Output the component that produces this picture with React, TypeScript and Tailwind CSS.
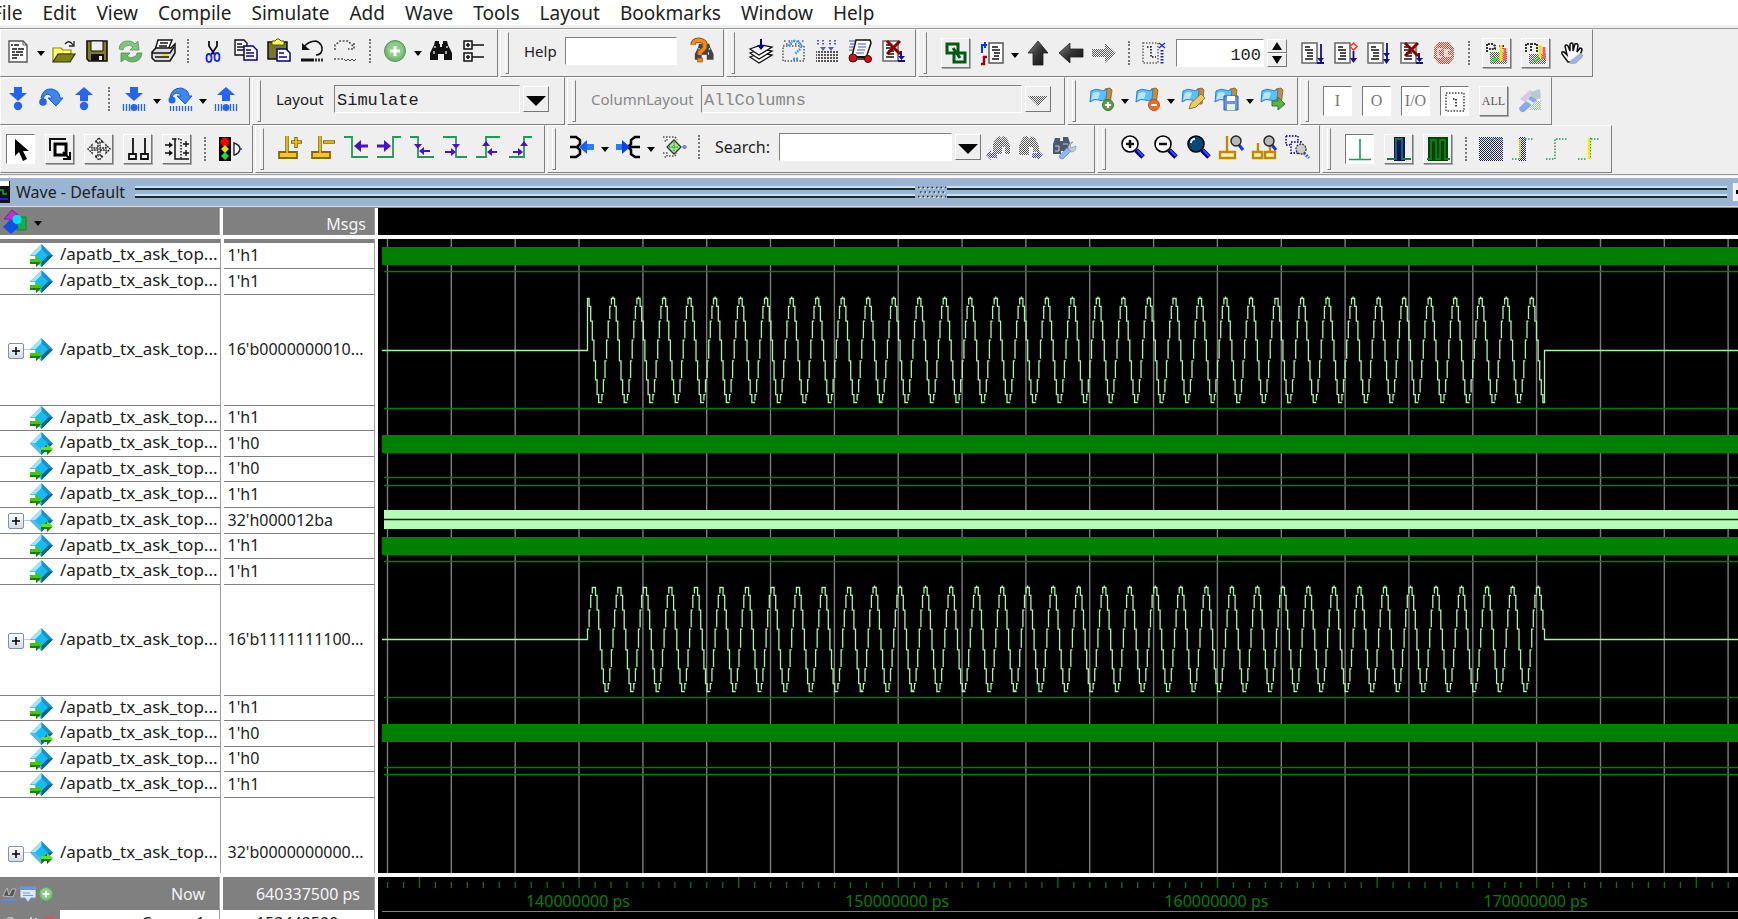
import type { ReactNode } from "react";

const signals = [
  { value: "1'h1", dir: "in", size: "h-[26px]" },
  { value: "1'h1", dir: "in", size: "h-[26px]" },
  { value: "16'b0000000010...", dir: "in", size: "h-[111px]", bus: true },
  { value: "1'h1", dir: "in", size: "h-[25px]" },
  { value: "1'h0", dir: "out", size: "h-[26px]" },
  { value: "1'h0", dir: "in", size: "h-[25px]" },
  { value: "1'h1", dir: "in", size: "h-[26px]" },
  { value: "32'h000012ba", dir: "out", size: "h-[26px]", bus: true },
  { value: "1'h1", dir: "in", size: "h-[25px]" },
  { value: "1'h1", dir: "in", size: "h-[26px]" },
  { value: "16'b1111111100...", dir: "in", size: "h-[111px]", bus: true },
  { value: "1'h1", dir: "in", size: "h-[25px]" },
  { value: "1'h0", dir: "out", size: "h-[26px]" },
  { value: "1'h0", dir: "in", size: "h-[25px]" },
  { value: "1'h1", dir: "in", size: "h-[26px]" },
  { value: "32'b0000000000...", dir: "out", size: "h-[111px]", bus: true },
];

const menus = ["File", "Edit", "View", "Compile", "Simulate", "Add", "Wave", "Tools", "Layout", "Bookmarks", "Window", "Help"];

/* ---------- icon parts ---------- */

const blue = "#2563f5";
const edge = "#229a55";
const violet = "#4a0fd0";

const docLines = (
  <>
    <path d="M2 2h15v20H2z" fill="#fff" stroke="#666" strokeWidth="1.5" />
    <path d="M5 6h5M5 9h8M7 12h6M7 15h6M5 18h8" stroke="#111" strokeWidth="1.4" />
  </>
);

const redCross = <path d="M6 2l13 13M19 2L6 15" stroke="#8b0000" strokeWidth="3" />;

const bookmark = (
  <>
    <path d="M15 2l5-1 2 2-2 14h-5z" fill="#c98a3c" stroke="#8a5a1c" strokeWidth=".8" />
    <path d="M1 4q5-3 9-1t7-1l-1 10q-3 3-7 1t-9 2z" fill="#5cc0f6" stroke="#2f80c8" />
    <path d="M3 6q4-2 7 0l-2 6q-3-1-7 1z" fill="#b4e6ff" />
  </>
);

const bars = <path d="M1.5 17v7M4.5 17v7M7.5 17v7M16.5 17v7M19.5 17v7M22.5 17v7" stroke={blue} strokeWidth="1.3" />;

const binoculars = (fill: string) => (
  <>
    <path d="M6 2h4v3h1v3h2V5h1V2h4l1 4 4 8v7h-8v-6h-6v6H1v-7l4-8z" fill={fill} />
    <path d="M6 7v2M5 12v3M18 7v2M17 12v3" stroke="#fff" strokeWidth="1.2" />
  </>
);

const magnifier = (fill: string) => (
  <>
    <path d="M16 15l7 7" stroke="#000080" strokeWidth="5" />
    <path d="M17 15l6 6" stroke="#3050ff" strokeWidth="2" />
    <circle cx="10" cy="9" r="8" fill={fill} stroke="#000" strokeWidth="1.6" />
  </>
);

const smallLens = (
  <>
    <path d="M20 10l4 5" stroke="#2030e0" strokeWidth="3" />
    <circle cx="17" cy="6" r="5" fill="#b8b8b8" stroke="#222" strokeWidth="1.4" />
  </>
);

const icons: Record<string, ReactNode> = {
  new: (
    <>
      <path d="M3 2h14l4 4v17H3z" fill="#fff" stroke="#555" strokeWidth="1.4" />
      <path d="M17 2v4h4" fill="none" stroke="#555" />
      <path d="M5 6h2m1 0h5M6 10h5m1 0h6M6 13h3m1 0h7M6 16h7m1 0h3M6 19h5" stroke="#111" strokeWidth="1.6" />
    </>
  ),
  open: (
    <>
      <path d="M1 9h8l2 2h8v4H7l-5 7H1z" fill="#ffff70" stroke="#8a8a00" strokeWidth="1.2" />
      <path d="M6 15h17l-5 8H1z" fill="#80801a" stroke="#333300" strokeWidth="1.2" />
      <path d="M13 5q4-5 8 1m1-4v5h-5" fill="none" stroke="#222" strokeWidth="1.3" />
    </>
  ),
  save: (
    <>
      <path d="M2 2h20v20H4l-2-2z" fill="#80801a" stroke="#111" strokeWidth="1.6" />
      <path d="M6 2h12v10H6z" fill="#eee" stroke="#111" />
      <path d="M6 15h13v7H6z" fill="#111" />
      <path d="M14 17h3v4h-3z" fill="#eee" />
    </>
  ),
  refresh: (
    <>
      <path d="M1 10Q2 1 11 2q4 0 6 3l3-3 1 9h-9l3-3q-3-3-7-1-3 1-3 4z" fill="#82c282" stroke="#5a9a5a" strokeWidth=".8" />
      <path d="M24 14q-1 9-10 9-4 0-7-3l-4 3v-9h9l-3 3q3 3 7 1 3-1 3-4z" fill="#6fb46f" stroke="#4f8f4f" strokeWidth=".8" />
    </>
  ),
  print: (
    <>
      <path d="M7 1h14l-4 10H4z" fill="#fff" stroke="#111" strokeWidth="1.4" />
      <path d="M9 4h8M8 7h8" stroke="#111" strokeWidth="1.3" />
      <path d="M1 13l4-4h15l4-4v9l-5 8H4l-3-3z" fill="#ddd" stroke="#111" strokeWidth="1.5" />
      <path d="M1 14h18l4-6M4 18h14" fill="none" stroke="#111" strokeWidth="1.4" />
      <path d="M11 16h6" stroke="#ffe000" strokeWidth="2" />
    </>
  ),
  cut: (
    <>
      <path d="M8 2v5l6 9M16 2v5l-6 9" fill="none" stroke="#111" strokeWidth="1.8" />
      <ellipse cx="8" cy="19" rx="2.5" ry="4" fill="none" stroke="#1020ff" strokeWidth="1.8" />
      <ellipse cx="16" cy="18" rx="2.5" ry="4" fill="none" stroke="#1020ff" strokeWidth="1.8" />
    </>
  ),
  copy: (
    <>
      <path d="M1 1h9l3 3v12H1z" fill="#fff" stroke="#111" strokeWidth="1.4" />
      <path d="M3 5h5M3 8h7M3 11h7" stroke="#111" strokeWidth="1.3" />
      <path d="M10 7h9l4 4v10H10z" fill="#fff" stroke="#00008b" strokeWidth="1.5" />
      <path d="M12 11h5M12 14h8M12 17h8" stroke="#00008b" strokeWidth="1.3" />
    </>
  ),
  paste: (
    <>
      <path d="M1 3h19v17H1z" fill="#77772a" stroke="#111" strokeWidth="1.5" />
      <path d="M5 2h3l2-2h2l2 2h3v4H5z" fill="#ffff60" stroke="#555500" />
      <path d="M10 10h9l4 4v8H10z" fill="#fff" stroke="#00008b" strokeWidth="1.5" />
      <path d="M12 14h5M12 18h8" stroke="#00008b" strokeWidth="1.3" />
    </>
  ),
  undo: (
    <>
      <path d="M3 9Q8 2 16 2q7 3 6 9-1 5-6 5" fill="none" stroke="#111" strokeWidth="1.6" />
      <path d="M2 4v7h8z" fill="#111" />
      <path d="M1 21h13" stroke="#111" strokeWidth="3" />
      <path d="M15 21h9" stroke="#333" strokeWidth="3" strokeDasharray="2 1" />
    </>
  ),
  redo: (
    <>
      <path d="M2 11V6l5-4h8l6 6m0-4v6h-6" fill="none" stroke="#555" strokeWidth="1.6" strokeDasharray="2 1.5" />
      <path d="M1 20h10" stroke="#555" strokeWidth="1.6" strokeDasharray="2 1.5" />
      <path d="M11 20l2 2 2-2 2 2 2-2 2 2 2-2" fill="none" stroke="#444" />
    </>
  ),
  plus: (
    <>
      <circle cx="12" cy="12" r="10.5" fill="#78b87a" stroke="#4f9a52" />
      <circle cx="12" cy="11" r="8" fill="#8fcb8c" />
      <path d="M12 7v10M7 12h10" stroke="#fff" strokeWidth="3" />
    </>
  ),
  binoc: binoculars("#111"),
  tree: (
    <path d="M2 2h8v8H2zM2 14h8v8H2zM4 6h4M6 4v4M4 18h4M6 16v4M10 6h12M10 18h12" fill="none" stroke="#111" strokeWidth="1.5" />
  ),
  helpFind: (
    <>
      <g transform="translate(4 3) scale(.85)">{binoculars("#444")}</g>
      <path d="M3 6q0-5 6-5 7 1 6 6 0 3-5 6v3" fill="none" stroke="#8a4400" strokeWidth="5" />
      <path d="M3 6q0-5 6-5 7 1 6 6 0 3-5 6v3" fill="none" stroke="#f58a1a" strokeWidth="3.5" />
      <path d="M7.5 19h5v4h-5z" fill="#f58a1a" stroke="#8a4400" strokeWidth=".6" />
    </>
  ),
  stack: (
    <>
      <path d="M1 18l11-4 11 2-13 8z" fill="#fff" stroke="#111" strokeWidth="1.3" />
      <path d="M1 14l11-4 11 2-13 8z" fill="#fff" stroke="#111" strokeWidth="1.3" />
      <path d="M1 10l11-4 11 2-13 8z" fill="#fff" stroke="#111" strokeWidth="1.3" />
      <path d="M12 0v9" stroke="#00008b" strokeWidth="2" />
      <path d="M8 6h8l-4 5z" fill="#00008b" />
    </>
  ),
  compileQ: (
    <>
      <path d="M1 7h21v15H1z" fill="none" stroke="#555" strokeWidth="1.5" strokeDasharray="1.5 1.5" />
      <path d="M2 2h20M4 5h18" stroke="#4050b0" strokeWidth="1.5" strokeDasharray="1.5 3" />
      <path d="M7 7q0-5 6-5 8 2 5 8l-5 5" fill="none" stroke="#3d9be8" strokeWidth="2.5" strokeDasharray="1.5 1" />
      <path d="M11 20h5" stroke="#3d9be8" strokeWidth="3" strokeDasharray="2 1" />
    </>
  ),
  compileAll: (
    <>
      <path d="M1 12h22v11H1z" fill="url(#dotGray)" />
      <path d="M3 1v6M8 1v6M15 1v6M20 1v6" stroke="#2a2aa0" strokeWidth="1.5" strokeDasharray="1.5 1.5" />
      <path d="M5 8l3 4 3-4zM13 8l3 4 3-4z" fill="#5a5ac0" />
    </>
  ),
  compileStep: (
    <>
      <path d="M8 1h14l1 3-4 12-3 4H5l-1-3z" fill="#fff" stroke="#111" strokeWidth="1.5" />
      <path d="M1 2h6M2 5h5M1 8h5M1 11h4M10 5h8M10 8h8M9 11h8M8 14h8" stroke="#4454b8" strokeWidth="1.2" />
      <path d="M3 18h18" stroke="#111" strokeWidth="2" />
      <circle cx="5" cy="19" r="4" fill="#d01020" stroke="#500" />
      <circle cx="20" cy="20" r="3.5" fill="#d01020" stroke="#500" />
    </>
  ),
  docStop: (
    <>
      {docLines}
      {redCross}
      <path d="M20 12v7M17 22h7" stroke="#101090" strokeWidth="2" />
      <path d="M17 17h7l-3.5 4z" fill="#101090" />
    </>
  ),
  link: <path d="M3 3h11v9H3zM10 12h11v9H10zM9 7l7 10" fill="none" stroke="#005a14" strokeWidth="3" />,
  restart: (
    <>
      <path d="M9 2h14v20H9z" fill="#fff" stroke="#555" strokeWidth="1.5" />
      <path d="M12 6h6M12 9h8M14 12h6M14 15h5M12 18h7" stroke="#111" strokeWidth="1.4" />
      <path d="M2 12V4h5M5 1v6" fill="none" stroke="#1030ff" strokeWidth="2" />
      <path d="M1 23h3v-7h3" fill="none" stroke="#a00010" strokeWidth="2.5" />
    </>
  ),
  arrowUp: <path d="M12 0l10 12h-5v12H7V12H2z" fill="url(#shade)" stroke="#222" strokeWidth=".8" />,
  arrowLeft: <path d="M0 12L11 2v6h13v8H11v6z" fill="url(#shade)" stroke="#222" strokeWidth=".8" />,
  arrowRight: <path d="M24 12L13 2v6H0v8h13v6z" fill="url(#stipGray)" />,
  stepBack: (
    <>
      <path d="M1 2h15v20H1z" fill="none" stroke="#666" strokeWidth="1.5" strokeDasharray="1.5 1.5" />
      <path d="M5 6h4v10h5" fill="none" stroke="#444" strokeWidth="2" strokeDasharray="1.5 1.5" />
      <path d="M17 2l6 5m0-5l-6 5" stroke="#2a2aa8" strokeWidth="1.3" />
      <path d="M20 9v14" stroke="#2a2aa8" strokeWidth="3" strokeDasharray="1.5 1.5" />
    </>
  ),
  run: (
    <>
      {docLines}
      <path d="M21 3v18M17 22h7" stroke="#101090" strokeWidth="1.8" />
      <path d="M17 17h7l-3.5 4z" fill="#101090" />
    </>
  ),
  runCont: (
    <>
      {docLines}
      <path d="M20.5 2l3.5 3.5L20.5 9 17 5.5z" fill="#fff" stroke="#ff3030" strokeWidth="1.5" />
      <path d="M20.5 10v10" stroke="#101090" strokeWidth="1.8" />
      <path d="M17 17h7l-3.5 5z" fill="#101090" />
    </>
  ),
  runAll: (
    <>
      {docLines}
      <path d="M21 2v18" stroke="#101090" strokeWidth="1.8" />
      <path d="M17 12h7l-3.5 4zM17 18h7l-3.5 5z" fill="#101090" />
    </>
  ),
  stop: (
    <>
      <path d="M7 1h10l5 6v10l-5 6H7l-5-6V7z" fill="url(#stipRed)" />
      <path d="M10 8H6v8h4M13 8v8M18 9h-3v6h4" stroke="#f4e4e0" strokeWidth="1.6" fill="none" />
    </>
  ),
  perf: (
    <>
      <path d="M5 11h17v12H5z" fill="url(#stipGray)" />
      <path d="M2 11V3h6l2 2v3H4M14 5h4v3" fill="none" stroke="#333" strokeWidth="2" strokeDasharray="2 1" />
      <path d="M16 4v16" stroke="#f0e020" strokeWidth="3" />
      <path d="M20 7v13" stroke="#ff5a5a" strokeWidth="3" />
      <path d="M8 15l5 3-5 4z" fill="#30e030" />
    </>
  ),
  mem: (
    <>
      <path d="M5 13h17v10H5z" fill="url(#stipGray)" />
      <path d="M2 11V3h5v8m0-8h6v8" fill="none" stroke="#333" strokeWidth="2" strokeDasharray="2 1" />
      <path d="M16 4v13" stroke="#f0e020" strokeWidth="3" />
      <path d="M20 6v12" stroke="#ff5a5a" strokeWidth="3" />
      <path d="M9 18l3 2 3-4" stroke="#30e030" strokeWidth="2" fill="none" />
    </>
  ),
  hand: (
    <>
      <path d="M8 21Q5 17 2 13q-1-3 2-2l3 3L5 5q1-2 3 0l2 5V3q2-2 3 0v7l2-7q2-1 3 1l-1 7 3-4q2 0 2 2-2 7-6 12z" fill="#fff" stroke="#111" strokeWidth="1.5" />
      <path d="M10 23q-2-3 4-6l6-5q5 1 2 5l-7 6z" fill="#9ab6e4" />
    </>
  ),
  stepInto: (
    <>
      <path d="M8 0h8v6h5l-9 8-9-8h5z" fill={blue} />
      <circle cx="12" cy="19" r="4.2" fill={blue} />
    </>
  ),
  stepOver: (
    <>
      <path d="M2 11Q4 1 13 2q8 2 8 9h3l-7 8-8-8h4q-1-4-5-4-3 1-4 5z" fill="#3d86ea" stroke="#1a5ad0" />
      <circle cx="4" cy="15" r="3.8" fill={blue} />
    </>
  ),
  stepOut: (
    <>
      <path d="M12 0l9 8h-5v6H8V8H3z" fill={blue} />
      <circle cx="12" cy="19" r="4.2" fill={blue} />
    </>
  ),
  stepIntoCur: (
    <>
      <path d="M8 0h8v6h5l-9 8-9-8h5z" fill={blue} />
      <circle cx="12" cy="20.5" r="3.5" fill={blue} />
      {bars}
    </>
  ),
  stepOverCur: (
    <>
      <path d="M2 10Q4 1 13 1q8 2 8 8h3l-7 8-8-8h4q-1-3-5-3-3 1-4 4z" fill="#3d86ea" stroke="#1a5ad0" />
      <circle cx="4" cy="13" r="3.5" fill={blue} />
      <path d="M2.5 19v5M5.5 19v5M8.5 19v5M11.5 19v5M14.5 19v5M17.5 19v5M20.5 19v5M23.5 19v5" stroke={blue} strokeWidth="1.3" />
    </>
  ),
  stepOutCur: (
    <>
      <path d="M12 0l9 8h-5v6H8V8H3z" fill={blue} />
      <circle cx="12" cy="20.5" r="3.5" fill={blue} />
      {bars}
    </>
  ),
  markAdd: (
    <>
      {bookmark}
      <circle cx="18" cy="18" r="5.5" fill="#5aa048" stroke="#3a7a2c" />
      <path d="M18 15v6M15 18h6" stroke="#fff" strokeWidth="2" />
    </>
  ),
  markDel: (
    <>
      {bookmark}
      <circle cx="18" cy="18" r="5.5" fill="#f06a28" stroke="#c84a10" />
      <path d="M15 18h6" stroke="#fff" strokeWidth="2" />
    </>
  ),
  markEdit: (
    <>
      {bookmark}
      <path d="M7 22l2-6 10-9 4 4-9 9z" fill="#f0c860" stroke="#a07828" />
    </>
  ),
  markSave: (
    <>
      {bookmark}
      <path d="M9 9h14v14H9z" fill="#6a94dc" stroke="#2f5cb0" />
      <path d="M12 9h8v5h-8z" fill="#fff" />
      <path d="M12 17h8v6h-8z" fill="#e4f0d8" />
    </>
  ),
  markGo: (
    <>
      {bookmark}
      <path d="M11 14h6v-4l7 7-7 6v-4h-6z" fill="#5cb050" stroke="#2f7a28" />
    </>
  ),
  internal: (
    <>
      <path d="M3 4h18v18H3z" fill="none" stroke="#444" strokeWidth="1.5" strokeDasharray="1.5 1.5" />
      <path d="M10 10h3v8" fill="none" stroke="#444" strokeWidth="2" strokeDasharray="1.5 1.5" />
    </>
  ),
  filter: (
    <>
      <path d="M2 10l10-9 4 3-9 9z" fill="#dcc8e4" />
      <path d="M13 3l9-3 1 9-9 3z" fill="#b8cccc" />
      <path d="M12 12h11v9H12z" fill="url(#stipGreen)" />
      <path d="M1 19L13 7l6 4L6 23q-4 1-5-4z" fill="#8aa8ee" />
      <path d="M9 11l6 4" stroke="#d8f0f4" strokeWidth="3" />
    </>
  ),
  select: <path d="M6 2v17l4-4 4 9 4-2-4-8h6z" fill="#000" />,
  zoomMode: (
    <>
      <path d="M2 14V2h16" fill="none" stroke="#111" strokeWidth="2" />
      <path d="M7 7h11v11H7z" fill="#fff" stroke="#000" strokeWidth="3" />
      <path d="M15 15l6 6m1-6v7h-7" fill="none" stroke="#000" strokeWidth="2" />
    </>
  ),
  pan: (
    <path
      d="M12 1l4 4h-3v6h6V8l4 4-4 4v-3h-6v6h3l-4 4-4-4h3v-6H5v3l-4-4 4-4v3h6V5H8z"
      fill="#fff"
      stroke="#222"
      strokeDasharray="2 .8"
      strokeWidth="1.4"
    />
  ),
  twoCursor: <path d="M7 1v16M19 1v16M3 17h7v5H3zM15 17h7v5h-7z" fill="none" stroke="#111" strokeWidth="1.8" />,
  editMode: (
    <>
      <path d="M10 2h6v20" fill="none" stroke="#111" strokeWidth="1.5" strokeDasharray="1.5 1.5" />
      <path d="M7 2h3v20h6M16 22h8" fill="none" stroke="#111" strokeWidth="1.5" />
      <path d="M0 8h5M0 16h5M18 7h6M18 16h6M21 4v6M21 13v6" stroke="#111" strokeWidth="1.4" />
      <path d="M4 5l4 3-4 3zM4 13l4 3-4 3z" fill="#111" />
    </>
  ),
  traffic: (
    <>
      <path d="M1 0h12v24H1z" fill="#000" />
      <circle cx="7" cy="5" r="4.5" fill="#f00000" />
      <path d="M7 8l4 4-4 4-4-4z" fill="#e8e000" />
      <path d="M7 15l4 4-4 4-4-4z" fill="#20e020" />
      <path d="M16 6q6 2 6 6-1 5-6 6z" fill="#fff" stroke="#222" strokeWidth="1.4" />
      <path d="M22 12h2" stroke="#2030e0" strokeWidth="1.5" />
    </>
  ),
  cursorAdd: (
    <>
      <path d="M9 1v17M13 7h11M18 2v11" stroke="#8a6800" strokeWidth="3.5" />
      <path d="M1 17h18v6H1z" fill="#f4c820" stroke="#8a6800" strokeWidth="1.8" />
      <path d="M9 1v18M14 7h9M18 3v9" stroke="#f4c820" strokeWidth="1.6" />
    </>
  ),
  cursorDel: (
    <>
      <path d="M9 1v17M12 7h12" stroke="#8a6800" strokeWidth="3.5" />
      <path d="M1 17h18v6H1z" fill="#f4c820" stroke="#8a6800" strokeWidth="1.8" />
      <path d="M9 1v18M13 7h10" stroke="#f4c820" strokeWidth="1.6" />
    </>
  ),
  edgePrev: (
    <>
      <path d="M0 2h8v20h16" fill="none" stroke={edge} strokeWidth="1.8" />
      <path d="M16 11h8" stroke={violet} strokeWidth="3" />
      <path d="M17 5v12l-7-6z" fill={violet} />
    </>
  ),
  edgeNext: (
    <>
      <path d="M0 22h16V2h8" fill="none" stroke={edge} strokeWidth="1.8" />
      <path d="M0 11h7" stroke={violet} strokeWidth="3" />
      <path d="M7 5v12l7-6z" fill={violet} />
    </>
  ),
  fallPrev: (
    <>
      <path d="M0 2h8v20h16" fill="none" stroke={edge} strokeWidth="1.8" />
      <path d="M13 16h7" stroke={violet} strokeWidth="2" />
      <path d="M4 9h8l-4 5zM14 12v8l-5-4z" fill={violet} />
    </>
  ),
  fallNext: (
    <>
      <path d="M0 2h13v20h11" fill="none" stroke={edge} strokeWidth="1.8" />
      <path d="M2 17h7" stroke={violet} strokeWidth="2" />
      <path d="M9 9h8l-4 5zM8 13v8l5-4z" fill={violet} />
    </>
  ),
  risePrev: (
    <>
      <path d="M0 22h10V2h14" fill="none" stroke={edge} strokeWidth="1.8" />
      <path d="M15 17h6" stroke={violet} strokeWidth="2" />
      <path d="M6 11h8l-4-5zM16 13v8l-5-4z" fill={violet} />
    </>
  ),
  riseNext: (
    <>
      <path d="M0 22h15V2h8" fill="none" stroke={edge} strokeWidth="1.8" />
      <path d="M4 17h6" stroke={violet} strokeWidth="2" />
      <path d="M11 11h8l-4-5zM9 13v8l5-4z" fill={violet} />
    </>
  ),
  drivers: (
    <>
      <path d="M0 2h6l4 3v4l-3 3 3 3v4l-4 3H0M0 12h7" fill="none" stroke="#000" strokeWidth="2.5" />
      <path d="M15 9h9v6h-9z" fill="#2a7cf8" />
      <path d="M17 5v14l-8-7z" fill="#1a60f4" />
    </>
  ),
  readers: (
    <>
      <path d="M24 2h-5l-4 3v4l-3 3 3 3v4l4 3h5M12 12h12" fill="none" stroke="#000" strokeWidth="2.5" />
      <path d="M0 9h7v6H0z" fill="#2a7cf8" />
      <path d="M6 5v14l8-7z" fill="#0a3ff0" />
    </>
  ),
  expandNet: (
    <>
      <path d="M1 2h4v4H1M7 2h6l2 3M1 18h4v4H1M7 21h6l2-3" fill="none" stroke="#555" strokeWidth="1.5" strokeDasharray="1.5 1.5" />
      <path d="M12 5l7 7-7 7-7-7z" fill="#a6e6a0" stroke="#333" strokeWidth="1.3" />
      <path d="M12 7v10M7 12h10" stroke="#20b020" strokeWidth="1.5" strokeDasharray="1.5 1" />
      <path d="M22.5 10l2 2-2 2-2-2z" fill="#9090ff" stroke="#3040f0" strokeWidth=".8" />
    </>
  ),
  searchPrev: (
    <>
      <path d="M10 3l4-2 1 3 2-3 4 2 3 8v8h-5v-7h-3v7H7V9z" fill="url(#stipGray)" />
      <path d="M0 20l5-5v3h6v5H5v2z" fill="url(#stipBlue)" />
    </>
  ),
  searchNext: (
    <>
      <path d="M4 2l4-1 2 3 2-3 4 2 4 8v6h-6v-5h-4v8H0v-9z" fill="url(#stipGray)" />
      <path d="M24 20l-5-5v3h-6v5h6v2z" fill="url(#stipBlue)" />
    </>
  ),
  searchOpts: (
    <>
      <path d="M3 3h5v3h3V2h5l2 6v8H9v3H1V9z" fill="#4a5a6c" />
      <path d="M3 11h4v5H3M11 9h5" stroke="#c0ccd8" fill="none" />
      <path d="M21 7l-3 3 1 3 5-2q0 6-5 6l-3-3q0-6 5-7z" fill="#c8ccd4" stroke="#9098a4" strokeWidth=".8" />
      <path d="M7 21l8-8 4 3-8 8q-4 0-4-3z" fill="#8eb8f0" stroke="#6a94d0" strokeWidth=".8" />
    </>
  ),
  zoomIn: (
    <>
      {magnifier("#fff")}
      <path d="M10 5v8M6 9h8" stroke="#111" strokeWidth="2.5" />
    </>
  ),
  zoomOut: (
    <>
      {magnifier("#fff")}
      <path d="M6 9h8" stroke="#111" strokeWidth="2.5" />
    </>
  ),
  zoomFull: (
    <>
      {magnifier("#064878")}
      <path d="M5 8q0-4 4-4" stroke="#dff" strokeWidth="1.8" fill="none" />
    </>
  ),
  zoomCursor: (
    <>
      <path d="M8 1v16M1 17h15v6H1z" fill="#fff2b0" stroke="#c08a00" strokeWidth="2.4" />
      {smallLens}
    </>
  ),
  zoomTwo: (
    <>
      <path d="M6 8v9M1 17h9v6H1zM18 10v7M13 17h10v6H13z" fill="#fff2b0" stroke="#c08a00" strokeWidth="2.4" />
      {smallLens}
    </>
  ),
  zoomArea: (
    <>
      <path d="M1 1h12v5M1 1v9h4M6 7h10v11H6z" fill="none" stroke="#2a2aa8" strokeWidth="1.8" strokeDasharray="1.5 1.5" />
      <path d="M19 18l5 5" stroke="#5060f0" strokeWidth="3" strokeDasharray="2 1" />
      <circle cx="16" cy="14" r="5" fill="#ccc" stroke="#444" strokeWidth="1.4" strokeDasharray="2 1" />
    </>
  ),
  pulse: <path d="M12 2v20M1 22.5h22" stroke={edge} strokeWidth="1.6" />,
  pulseBlue: (
    <>
      <path d="M7 0h11v24H7z" fill="#10106c" />
      <path d="M0 22h9V2h6v20h9" fill="none" stroke="#167a44" strokeWidth="1.8" />
    </>
  ),
  pulseGreen: (
    <>
      <path d="M2 0h20v24H2z" fill="#004400" />
      <path d="M1 22h4V3h5v19h4V3h5v19h5" fill="none" stroke="#127a2c" strokeWidth="1.8" />
    </>
  ),
  fillAll: (
    <>
      <path d="M0 0h24v24H0z" fill="url(#stipNavy)" />
      <path d="M12 22V2h11" fill="none" stroke={edge} strokeDasharray="1.5 1.5" />
    </>
  ),
  fillEdge: (
    <>
      <path d="M7 0h7v24H7z" fill="url(#stipNavy)" />
      <path d="M8 2v20" stroke="#e8e020" strokeWidth="1.5" />
      <path d="M0 22h7M13 2h9" stroke={edge} strokeWidth="1.5" strokeDasharray="1.5 1.5" />
    </>
  ),
  stepEdge: <path d="M1 22h9V2h12" fill="none" stroke={edge} strokeWidth="1.5" strokeDasharray="1.5 1.5" />,
  stepMark: (
    <>
      <path d="M0 22h9M13 2h9" stroke={edge} strokeWidth="1.5" strokeDasharray="1.5 1.5" />
      <path d="M11 1v21" stroke="#f4f000" strokeWidth="2.5" />
      <path d="M12.5 1v21" stroke={edge} strokeDasharray="1.5 1.5" />
    </>
  ),
  objects: (
    <>
      <path d="M1 9l8-9 6 5-6 6-3-2z" fill="#c030d8" stroke="#701080" strokeWidth=".8" />
      <path d="M14 7h9v13h-9z" fill="#18b040" stroke="#0a7828" strokeWidth=".8" />
      <path d="M8 9l8 8-8 7-8-7z" fill="#1050e8" />
      <circle cx="14" cy="9.500" r="4.500" fill="#00e4ff" />
    </>
  ),
};

function Icon({ name }: { name: string }) {
  return (
    <svg viewBox="0 0 24 24" className="h-6 w-6 overflow-visible" aria-hidden="true">
      {icons[name]}
    </svg>
  );
}

/* ---------- toolbar controls ---------- */

function Tool({ name }: { name: string }) {
  return (
    <button aria-label={name} className="flex w-[33px] shrink-0 justify-center">
      <Icon name={name} />
    </button>
  );
}

function Boxed({ name, on, children }: { name: string; on?: boolean; children?: ReactNode }) {
  return (
    <button
      aria-label={name}
      className={`mx-[5px] flex h-[30px] w-[29px] shrink-0 items-center justify-center border ${
        on ? "border-t-[#777] border-l-[#777] border-r-white border-b-white bg-white" : "border-t-white border-l-white border-r-[#777] border-b-[#777] shadow-[1px_1px_0_#aaa]"
      }`}
    >
      {children ?? <Icon name={name} />}
    </button>
  );
}

function Caret() {
  return (
    <button aria-label="more" className="flex w-[13px] shrink-0 justify-center pt-1">
      <svg viewBox="0 0 8 5" className="h-[5px] w-2">
        <path d="M0 0h8L4 5z" />
      </svg>
    </button>
  );
}

function Sep() {
  return (
    <div className="flex w-[17px] shrink-0 justify-center">
      <div className="h-6 border-l-2 border-dotted border-[#777]" />
    </div>
  );
}

function DropButton({ dim }: { dim?: boolean }) {
  return (
    <button
      aria-label="open list"
      className="ml-[3px] flex h-[26px] w-[26px] shrink-0 items-center justify-center border border-t-white border-l-white border-r-[#777] border-b-[#777]"
    >
      <svg viewBox="0 0 20 10" className="mt-1 h-[10px] w-5">
        <path d="M0 0h20L10 10z" fill={dim ? "url(#stipGray)" : "#000"} />
      </svg>
    </button>
  );
}

function Toolbar({ width, first, flush, children }: { width: string; first?: boolean; flush?: boolean; children: ReactNode }) {
  return (
    <div
      className={`flex h-12 shrink-0 items-center border border-t-white border-l-white border-r-[#808080] border-b-[#808080] ${width} ${flush ? "" : "pb-1"}`}
    >
      {!first && (
        <div className={`mr-[9px] ml-1 h-[42px] w-1 shrink-0 border border-t-white border-l-white border-r-[#808080] border-b-[#808080] ${flush ? "" : "mt-1"}`} />
      )}
      {children}
    </div>
  );
}

const sunken = "border border-t-[#808080] border-l-[#808080] border-r-white border-b-white";
const mono = "font-['Liberation_Mono',monospace] text-[17px] pt-1";

function Toolbars() {
  return (
    <div className="bg-[#efefef] text-[16px] leading-5 text-[#222]">
      <div className="flex gap-[2px]">
        <Toolbar width="w-[498px]" first>
          <Tool name="new" /><Caret />
          <Tool name="open" /><Tool name="save" /><Tool name="refresh" /><Tool name="print" />
          <Sep />
          <Tool name="cut" /><Tool name="copy" /><Tool name="paste" /><Tool name="undo" /><Tool name="redo" />
          <Sep />
          <Tool name="plus" /><Caret />
          <Tool name="binoc" /><Tool name="tree" />
        </Toolbar>
        <Toolbar width="w-[224px]">
          <label htmlFor="help" className="w-[47px] shrink-0 pl-1.5 text-[15px]">Help</label>
          <input id="help" className={`h-7 w-[112px] bg-white px-1 ${sunken}`} />
          <div className="ml-2"><Tool name="helpFind" /></div>
        </Toolbar>
        <Toolbar width="w-[190px]">
          <Tool name="stack" /><Tool name="compileQ" /><Tool name="compileAll" /><Tool name="compileStep" /><Tool name="docStop" />
        </Toolbar>
        <Toolbar width="w-[675px]" flush>
          <Boxed name="link" />
          <Tool name="restart" /><Caret />
          <Tool name="arrowUp" /><Tool name="arrowLeft" /><Tool name="arrowRight" />
          <Sep />
          <Tool name="stepBack" />
          <input
            aria-label="Run length"
            defaultValue="100"
            className={`ml-1.5 h-7 w-[88px] bg-white px-0.5 text-right ${mono} ${sunken}`}
          />
          <div className="mr-2 ml-[3px] flex w-5 flex-col">
            <button aria-label="increase" className="flex h-[14px] items-center justify-center border border-t-white border-l-white border-r-[#777] border-b-[#777]">
              <svg viewBox="0 0 10 8" className="h-2 w-[10px]"><path d="M0 8h10L5 0z" /></svg>
            </button>
            <button aria-label="decrease" className="flex h-[14px] items-center justify-center border border-t-white border-l-white border-r-[#777] border-b-[#777]">
              <svg viewBox="0 0 10 8" className="h-2 w-[10px]"><path d="M0 0h10L5 8z" /></svg>
            </button>
          </div>
          <Tool name="run" /><Tool name="runCont" /><Tool name="runAll" /><Tool name="docStop" /><Tool name="stop" />
          <Sep />
          <Boxed name="perf" /><Boxed name="mem" />
          <Tool name="hand" />
        </Toolbar>
      </div>

      <div className="flex gap-[2px]">
        <Toolbar width="w-[250px]" first>
          <Tool name="stepInto" /><Tool name="stepOver" /><Tool name="stepOut" />
          <Sep />
          <Tool name="stepIntoCur" /><Caret />
          <Tool name="stepOverCur" /><Caret />
          <Tool name="stepOutCur" />
        </Toolbar>
        <Toolbar width="w-[313px]">
          <label htmlFor="layout" className="w-[64px] shrink-0 pl-1.5 text-[15px]">Layout</label>
          <select id="layout" className={`h-7 w-[186px] appearance-none px-0.5 ${mono} ${sunken}`}>
            <option>Simulate</option>
          </select>
          <DropButton />
        </Toolbar>
        <Toolbar width="w-[498px]">
          <label htmlFor="columns" className="w-[116px] shrink-0 pl-1.5 text-[15px] text-[#888]">ColumnLayout</label>
          <select
            id="columns"
            disabled
            className={`h-7 w-[321px] appearance-none px-0.5 text-[#888] opacity-100 ${mono} ${sunken}`}
          >
            <option>AllColumns</option>
          </select>
          <DropButton dim />
        </Toolbar>
        <Toolbar width="w-[231px]">
          <Tool name="markAdd" /><Caret />
          <Tool name="markDel" /><Caret />
          <Tool name="markEdit" />
          <Tool name="markSave" /><Caret />
          <Tool name="markGo" />
        </Toolbar>
        <Toolbar width="w-[252px]" flush>
          <Boxed name="inputs" on><span className="font-['Liberation_Serif',serif] text-[#777]">I</span></Boxed>
          <Boxed name="outputs" on><span className="font-['Liberation_Serif',serif] text-[#777]">O</span></Boxed>
          <Boxed name="inouts" on><span className="font-['Liberation_Serif',serif] text-[#777]">I/O</span></Boxed>
          <Boxed name="internal" on />
          <Boxed name="all"><span className="font-['Liberation_Serif',serif] text-[12px] text-[#555]">ALL</span></Boxed>
          <Tool name="filter" />
        </Toolbar>
      </div>

      <div className="flex gap-[2px]">
        <Toolbar width="w-[253px]" first flush>
          <Boxed name="select" on />
          <Boxed name="zoomMode" /><Boxed name="pan" /><Boxed name="twoCursor" /><Boxed name="editMode" />
          <Sep />
          <Tool name="traffic" />
        </Toolbar>
        <Toolbar width="w-[290px]">
          <Tool name="cursorAdd" /><Tool name="cursorDel" /><Tool name="edgePrev" /><Tool name="edgeNext" />
          <Tool name="fallPrev" /><Tool name="fallNext" /><Tool name="risePrev" /><Tool name="riseNext" />
        </Toolbar>
        <Toolbar width="w-[548px]">
          <Tool name="drivers" /><Caret />
          <Tool name="readers" /><Caret />
          <Tool name="expandNet" />
          <Sep />
          <label htmlFor="search" className="w-[72px] shrink-0 pl-2">Search:</label>
          <input id="search" className={`h-7 w-[173px] bg-white px-1 ${sunken}`} />
          <DropButton />
          <Tool name="searchPrev" /><Tool name="searchNext" /><Tool name="searchOpts" />
        </Toolbar>
        <Toolbar width="w-[223px]">
          <Tool name="zoomIn" /><Tool name="zoomOut" /><Tool name="zoomFull" />
          <Tool name="zoomCursor" /><Tool name="zoomTwo" /><Tool name="zoomArea" />
        </Toolbar>
        <Toolbar width="w-[290px]" flush>
          <Boxed name="pulse" on /><Boxed name="pulseBlue" /><Boxed name="pulseGreen" />
          <Sep />
          <Tool name="fillAll" /><Tool name="fillEdge" /><Tool name="stepEdge" /><Tool name="stepMark" />
        </Toolbar>
      </div>
    </div>
  );
}

function Patterns() {
  const stipples = [
    ["stipGray", "#555"],
    ["stipNavy", "#1a1a80"],
    ["stipRed", "#f03018"],
    ["stipBlue", "#3030ff"],
    ["stipGreen", "#90c890"],
  ];
  return (
    <svg className="absolute h-0 w-0" aria-hidden="true">
      <defs>
        {stipples.map(([id, color]) => (
          <pattern key={id} id={id} width="2" height="2" patternUnits="userSpaceOnUse">
            <path d="M0 0h1v1H0zM1 1h1v1H1z" fill={color} />
            <path d="M1 0h1v1H1zM0 1h1v1H0z" fill="#fff" opacity=".5" />
          </pattern>
        ))}
        <pattern id="dotGray" width="3" height="3" patternUnits="userSpaceOnUse">
          <path d="M0 0h2v2H0z" fill="#555" />
        </pattern>
        <linearGradient id="shade" x1="0" y1="0" x2="1" y2="1">
          <stop offset="0" stopColor="#888" />
          <stop offset=".5" stopColor="#333" />
          <stop offset="1" stopColor="#111" />
        </linearGradient>
      </defs>
    </svg>
  );
}

/* ---------- wave window ---------- */

function TitleBar() {
  const rule = "h-1 border-b-2 border-b-[#1c2a34] bg-[#bfe6f2]";
  return (
    <div>
      <div className="h-[5px] border-b-2 border-b-white bg-[#efefef] pt-px">
        <div className="h-px bg-[#999]" />
      </div>
      <div className="flex h-7 items-center bg-[#9ab4d2]">
        <svg viewBox="0 0 10 22" className="h-[22px] w-[10px] shrink-0">
          <path d="M0 0h10v22H0z" fill="#111" />
          <path d="M0 0h9v5H0z" fill="#fff" />
          <path d="M0 9h3v4h4" fill="none" stroke="#18a050" strokeWidth="1.5" />
          <path d="M0 18h8" stroke="#2020e0" strokeWidth="2" />
        </svg>
        <h1 className="w-[125px] shrink-0 pl-1.5 text-[16px] leading-5 whitespace-nowrap text-[#222]">Wave - Default</h1>
        <div className="flex w-[780px] flex-col gap-1">
          <div className={rule} />
          <div className={rule} />
        </div>
        <svg viewBox="0 0 32 12" className="h-3 w-8 shrink-0">
          <path d="M3 1.5h28M5 6h26M3 10.5h28" stroke="#26323e" strokeWidth="1.5" strokeDasharray="1.5 3" />
          <path d="M4.5 2.5h26M6.5 7h24M4.5 11.5h26" stroke="#e4f4fa" strokeDasharray="1.5 3" />
        </svg>
        <div className="flex flex-1 flex-col gap-1">
          <div className={rule} />
          <div className={rule} />
        </div>
        <button aria-label="Dock" className="ml-[6px] flex h-[18px] w-[5px] items-center justify-end border-l border-l-white bg-[#f0f0f0]">
          <span className="h-1 w-0.5 bg-black" />
        </button>
      </div>
      <div className="h-[2px] border-b border-b-[#888] bg-[#ddd]" />
    </div>
  );
}

function SignalIcon({ dir }: { dir: string }) {
  return (
    <svg viewBox="0 0 23 23" className="h-[23px] w-[23px] shrink-0" aria-hidden="true">
      <path d="M11.5 0L23 11.5 11.5 23 0 11.5z" fill="#1a90cc" />
      <path d="M11.5 0v11.5H0z" fill="#a4e4fa" />
      <path d="M0 11.5h11.5V23z" fill="#58bce8" />
      <path d="M11.5 11.5H23L11.5 23z" fill="#0c6488" />
      <path d="M11.5 5l6.5 6.5-6.5 6.5L5 11.5z" fill="#12bdf4" />
      {dir === "in" ? (
        <>
          <path d="M0 12h5v7H0z" fill="#fff" />
          <path d="M0 15h6v-3l6 5-6 6v-3H0z" fill="#44c808" />
          <path d="M0 18h11l-5 5v-3H0z" fill="#1c7c00" />
        </>
      ) : (
        <>
          <path d="M11 15h6v-3l6 5-6 6v-3h-6z" fill="#66e010" />
          <path d="M11 18h11l-5 5v-3h-6z" fill="#1c7c00" />
        </>
      )}
    </svg>
  );
}

function SignalTable() {
  return (
    <table className="w-full table-fixed border-collapse text-[16px] leading-5 text-[#222]">
      <colgroup>
        <col className="w-[220px]" />
        <col />
      </colgroup>
      <tbody>
        <tr>
          <td className="border-r border-[#a0a0a0] p-0"><div className="h-1 bg-[#808080]" /></td>
          <td className="border-r border-[#a0a0a0] p-0 pl-[3px]"><div className="h-1 bg-[#808080]" /></td>
        </tr>
        {signals.map((s, i) => (
          <tr key={i}>
            <td className="border-r border-[#a0a0a0] p-0">
              <div className={`flex items-center border-b border-[#808080] pb-px pl-2 ${s.size}`}>
                <div className="flex w-[22px] shrink-0 items-center">
                  {s.bus && (
                    <>
                      <button aria-label="Expand" className="mt-0.5 flex h-4 w-4 items-center justify-center rounded-xs border border-[#8090a8] bg-linear-to-b from-white to-[#d4dae4]">
                        <svg viewBox="0 0 8 8" className="h-2 w-2"><path d="M4 0v8M0 4h8" stroke="#000" strokeWidth="1.5" /></svg>
                      </button>
                      <span className="h-px flex-1 bg-[#ccc]" />
                    </>
                  )}
                </div>
                <SignalIcon dir={s.dir} />
                <span className="pb-0.5 pl-[7px] text-[17px] whitespace-nowrap">/apatb_tx_ask_top...</span>
              </div>
            </td>
            <td className="border-r border-[#a0a0a0] p-0 pl-[3px]">
              <div className={`flex items-center border-b border-[#808080] pb-0.5 pl-1 whitespace-nowrap ${s.size}`}>{s.value}</div>
            </td>
          </tr>
        ))}
      </tbody>
    </table>
  );
}

const START = 209.5;
const PERIOD = 25.52;
const SAMPLES = 600; // 37.5 periods of 16 samples
const AMPLITUDE = 53;

// Sample-and-hold trace; rising edges leave a small gap between the held levels
function analogPath(mid: number, shape: (t: number) => number) {
  const step = PERIOD / 16;
  let d = `M4 ${mid}H${START}`;
  let last = mid;
  for (let k = 0; k < SAMPLES; k++) {
    const x = START + k * step;
    const y = mid - AMPLITUDE * shape(((k + 0.5) * Math.PI) / 8);
    if (y < last && k > 0) d += `M${x.toFixed(1)} ${(last - 2).toFixed(1)}`;
    d += `V${y.toFixed(1)}H${(x + step).toFixed(1)}`;
    last = y;
  }
  return d + `V${mid}H4000`;
}

function Waves() {
  const grid = Array.from({ length: 40 }, (_, i) => 9.5 + i * 63.84);
  return (
    <svg className="h-full w-full bg-black">
      {grid.map((x) => (
        <path key={x} d={`M${x.toFixed(1)} 0V2000`} stroke="#7c7c7c" strokeWidth="1.4" />
      ))}
      {[8, 196, 298, 485].map((y) => (
        <rect key={y} x="4" y={y} width="100%" height="18" fill="#008000" />
      ))}
      {[32.5, 169.5, 238.5, 246.5, 322.5, 458.5, 528.5, 535.5].map((y) => (
        <path key={y} d={`M6 ${y}H4000`} stroke="#008000" strokeWidth="1.3" />
      ))}
      <rect x="6" y="271" width="100%" height="19" fill="#b4ffb4" />
      <path d="M6 280.5H4000" stroke="#001800" strokeWidth="1.5" />
      <path d={analogPath(111.5, Math.cos)} fill="none" stroke="#a8f4a8" strokeWidth="1.3" />
      <path d={analogPath(400.5, Math.sin)} fill="none" stroke="#a8f4a8" strokeWidth="1.3" />
    </svg>
  );
}

function Ruler() {
  const ticks = Array.from({ length: 150 }, (_, i) => i);
  const labels = ["140000000 ps", "150000000 ps", "160000000 ps", "170000000 ps"];
  return (
    <svg className="h-full w-full bg-black text-[16px]">
      {ticks.map((i) => (
        <path key={i} d={`M${(9.6 + i * 15.96).toFixed(1)} ${i % 10 === 2 ? 0 : 5}V11`} stroke="#007800" strokeWidth="1.3" />
      ))}
      {labels.map((text, i) => (
        <text key={text} x={200 + i * 319.2} y="30" textAnchor="middle" fill="#008000">
          {text}
        </text>
      ))}
      <path d="M4 34.5H4000" stroke="#808080" />
    </svg>
  );
}

function Footer() {
  return (
    <div className="flex text-[16px] leading-5">
      <div className="w-[220px] shrink-0 border-r border-[#a0a0a0]">
        <div className="flex h-[33px] items-center gap-0.5 bg-[#808080] pr-3.5 pl-0.5 text-[#f4f4f4]">
          <svg viewBox="0 0 16 16" className="h-4 w-4">
            <path d="M1 10l4-8 2 7 3-6h4l-3 8z" fill="#555" stroke="#ccc" strokeWidth=".8" />
            <path d="M0 14h15" stroke="#5a90d8" strokeWidth="2" />
          </svg>
          <svg viewBox="0 0 16 16" className="h-4 w-4">
            <path d="M0 1h16v11h-5l-3 4-3-4H0z" fill="#dce8fa" stroke="#6a96d8" />
            <path d="M0 1h16v3H0z" fill="#6a96d8" />
            <path d="M3 7h7M3 9.5h10" stroke="#8098b8" />
          </svg>
          <svg viewBox="0 0 24 24" className="h-4 w-4">{icons.plus}</svg>
          <span className="ml-auto">Now</span>
        </div>
        <div className="flex h-[26px] bg-white text-[#222]">
          <div className="flex w-[60px] items-center gap-1.5 bg-[#808080] px-1">
            <svg viewBox="0 0 16 16" className="h-4 w-4"><path d="M3 8V4q5-5 9 0v4M1 8h13v8H1z" fill="none" stroke="#bbb" strokeWidth="2" /></svg>
            <svg viewBox="0 0 16 16" className="h-4 w-4"><path d="M10 1L7 8l3 2 6-8M7 9l-6 7" fill="none" stroke="#ddd" strokeWidth="2" /></svg>
            <svg viewBox="0 0 16 16" className="h-4 w-4"><circle cx="8" cy="8" r="8" fill="#e05050" /></svg>
          </div>
          <span className="flex flex-1 items-center justify-end pr-3.5">Cursor 1</span>
        </div>
      </div>
      <div className="flex-1 border-r border-[#a0a0a0] pl-[3px] text-right">
        <div className="h-[33px] bg-[#808080] pt-[7px] pr-3.5 text-[#f4f4f4]">640337500 ps</div>
        <div className="h-[26px] pt-[3px] pr-3.5 text-[#222]">153443500 ps</div>
      </div>
    </div>
  );
}

export default function App() {
  return (
    <div className="relative flex h-screen flex-col overflow-hidden bg-white font-['Noto_Sans',sans-serif]">
      <Patterns />
      <nav className="-ml-2 flex h-[25px] shrink-0 items-center gap-5 text-[19px] leading-6 text-[#222]">
        {menus.map((m) => (
          <button key={m}>{m}</button>
        ))}
      </nav>
      <div className="h-1 shrink-0 border-b border-[#999] bg-[#efefef]" />
      <Toolbars />
      <TitleBar />

      <main className="grid min-h-0 flex-1 grid-cols-[378px_1fr] grid-rows-[27px_minmax(0,1fr)_42px]">
        <div className="flex pr-[3px] text-[16px] leading-5 text-[#f4f4f4]">
          <div className="flex w-[220px] items-center gap-1 border-r border-[#a0a0a0] bg-[#808080] pl-[3px]">
            <Icon name="objects" />
            <span className="text-black"><Caret /></span>
          </div>
          <div className="flex-1 border-r border-[#a0a0a0] pl-[3px]">
            <div className="h-full bg-[#808080] pt-1.5 pr-2 text-right">Msgs</div>
          </div>
        </div>
        <div className="bg-black" />

        <div className="overflow-hidden border-t-4 border-b-4 border-white pr-[3px]">
          <SignalTable />
        </div>
        <div className="overflow-hidden border-t-4 border-b-4 border-white">
          <Waves />
        </div>

        <div className="overflow-hidden pr-[3px]">
          <Footer />
        </div>
        <Ruler />
      </main>
    </div>
  );
}
